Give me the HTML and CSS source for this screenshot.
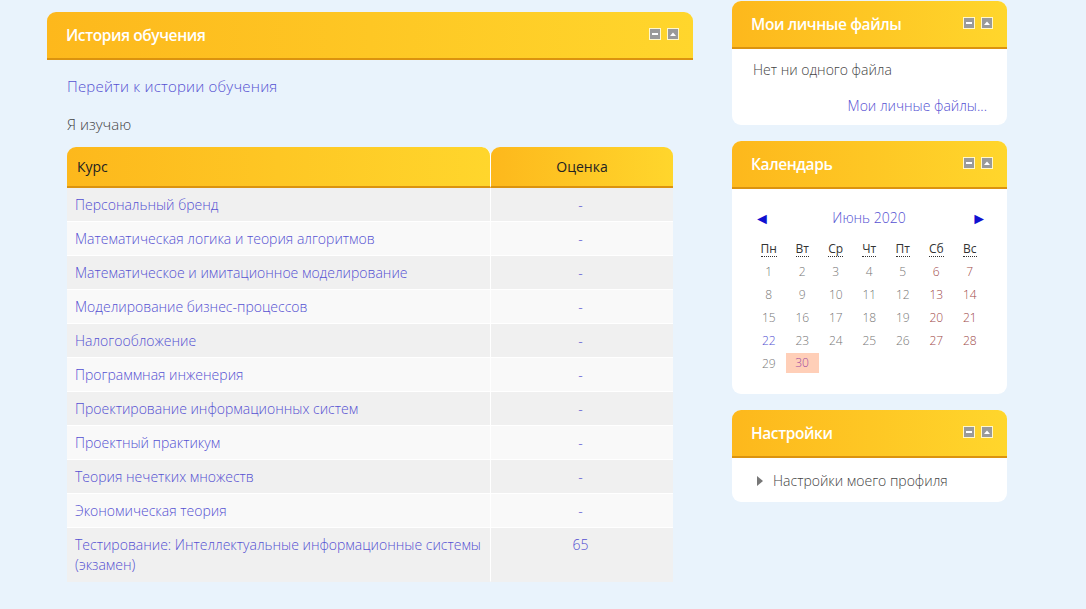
FILE: index.html
```html
<!DOCTYPE html>
<html lang="ru">
<head>
<meta charset="utf-8">
<link rel="stylesheet" href="styles.css">
</head>
<body>
<div class="page">
  <main class="main">
    <section class="block main-block">
      <header class="block-head">
        <h2>История обучения</h2>
        <div class="controls">
          <span class="ctl"><svg width="8" height="8" viewBox="0 0 8 8"><rect x="1" y="3" width="6" height="2" fill="#fff"/></svg></span>
          <span class="ctl"><svg width="8" height="8" viewBox="0 0 8 8"><path d="M1 6 L4 2.5 L7 6 Z" fill="#fff"/></svg></span>
        </div>
      </header>
      <div class="main-body">
        <p class="goto"><a href="#">Перейти к истории обучения</a></p>
        <p class="studying">Я изучаю</p>
        <table class="grades">
          <thead>
            <tr><th class="c-course">Курс</th><th class="c-grade">Оценка</th></tr>
          </thead>
          <tbody>
            <tr><td><a href="#">Персональный бренд</a></td><td class="g"><a href="#">-</a></td></tr>
            <tr><td><a href="#">Математическая логика и теория алгоритмов</a></td><td class="g"><a href="#">-</a></td></tr>
            <tr><td><a href="#">Математическое и имитационное моделирование</a></td><td class="g"><a href="#">-</a></td></tr>
            <tr><td><a href="#">Моделирование бизнес-процессов</a></td><td class="g"><a href="#">-</a></td></tr>
            <tr><td><a href="#">Налогообложение</a></td><td class="g"><a href="#">-</a></td></tr>
            <tr><td><a href="#">Программная инженерия</a></td><td class="g"><a href="#">-</a></td></tr>
            <tr><td><a href="#">Проектирование информационных систем</a></td><td class="g"><a href="#">-</a></td></tr>
            <tr><td><a href="#">Проектный практикум</a></td><td class="g"><a href="#">-</a></td></tr>
            <tr><td><a href="#">Теория нечетких множеств</a></td><td class="g"><a href="#">-</a></td></tr>
            <tr><td><a href="#">Экономическая теория</a></td><td class="g"><a href="#">-</a></td></tr>
            <tr><td><a href="#">Тестирование: Интеллектуальные информационные системы (экзамен)</a></td><td class="g"><a href="#">65</a></td></tr>
          </tbody>
        </table>
      </div>
    </section>
  </main>

  <aside class="side">
    <section class="block card">
      <header class="block-head">
        <h2>Мои личные файлы</h2>
        <div class="controls">
          <span class="ctl"><svg width="8" height="8" viewBox="0 0 8 8"><rect x="1" y="3" width="6" height="2" fill="#fff"/></svg></span>
          <span class="ctl"><svg width="8" height="8" viewBox="0 0 8 8"><path d="M1 6 L4 2.5 L7 6 Z" fill="#fff"/></svg></span>
        </div>
      </header>
      <div class="card-body files">
        <p class="nofiles">Нет ни одного файла</p>
        <p class="more"><a href="#">Мои личные файлы...</a></p>
      </div>
    </section>

    <section class="block card">
      <header class="block-head">
        <h2>Календарь</h2>
        <div class="controls">
          <span class="ctl"><svg width="8" height="8" viewBox="0 0 8 8"><rect x="1" y="3" width="6" height="2" fill="#fff"/></svg></span>
          <span class="ctl"><svg width="8" height="8" viewBox="0 0 8 8"><path d="M1 6 L4 2.5 L7 6 Z" fill="#fff"/></svg></span>
        </div>
      </header>
      <div class="card-body cal">
        <div class="cal-nav">
          <span class="arrow">◄</span>
          <a href="#" class="month">Июнь 2020</a>
          <span class="arrow">►</span>
        </div>
        <div class="cal-grid">
          <abbr>Пн</abbr><abbr>Вт</abbr><abbr>Ср</abbr><abbr>Чт</abbr><abbr>Пт</abbr><abbr>Сб</abbr><abbr>Вс</abbr>
          <span>1</span><span>2</span><span>3</span><span>4</span><span>5</span><span class="we">6</span><span class="we">7</span>
          <span>8</span><span>9</span><span>10</span><span>11</span><span>12</span><span class="we">13</span><span class="we">14</span>
          <span>15</span><span>16</span><span>17</span><span>18</span><span>19</span><span class="we">20</span><span class="we">21</span>
          <span class="ev">22</span><span>23</span><span>24</span><span>25</span><span>26</span><span class="we">27</span><span class="we">28</span>
          <span>29</span><span class="today">30</span>
        </div>
      </div>
    </section>

    <section class="block card">
      <header class="block-head">
        <h2>Настройки</h2>
        <div class="controls">
          <span class="ctl"><svg width="8" height="8" viewBox="0 0 8 8"><rect x="1" y="3" width="6" height="2" fill="#fff"/></svg></span>
          <span class="ctl"><svg width="8" height="8" viewBox="0 0 8 8"><path d="M1 6 L4 2.5 L7 6 Z" fill="#fff"/></svg></span>
        </div>
      </header>
      <div class="card-body settings">
        <p class="setitem"><svg class="tri" width="6" height="10" viewBox="0 0 6 10"><path d="M0 0 L6 5 L0 10 Z" fill="#777"/></svg>Настройки моего профиля</p>
      </div>
    </section>
  </aside>
</div>
</body>
</html>
```

FILE: styles.css
```css
* { box-sizing: border-box; }
html, body { margin: 0; padding: 0; }
body {
  background: #e9f3fc;
  font-family: "Open Sans", "Liberation Sans", sans-serif;
  font-size: 14px;
  font-weight: 300;
  color: #444;
  width: 1086px;
  height: 609px;
  overflow: hidden;
}
a { color: #5551d2; text-decoration: none; }
p { margin: 0; }

.page {
  display: flex;
  align-items: flex-start;
  padding-left: 47px;
  gap: 39px;
}

.main { width: 646px; padding-top: 12px; }
.side { width: 275px; padding-top: 1px; display: flex; flex-direction: column; gap: 16px; }

.block-head {
  height: 48px;
  display: flex;
  align-items: center;
  justify-content: space-between;
  padding: 0 14px 0 19px;
  border-radius: 9px 9px 0 0;
  background: linear-gradient(to right, #fdb81c, #ffd62c);
  border-bottom: 2px solid #db930f;
}
.block-head h2 {
  margin: 0;
  font-size: 15.5px;
  font-weight: 600;
  color: #fff;
  letter-spacing: -0.4px;
}
.controls { display: flex; gap: 6px; margin-top: -3px; }
.ctl {
  width: 12px; height: 12px;
  background: #9a9a9a;
  border: 1px solid #fff7cc;
  display: flex; align-items: center; justify-content: center;
}
.ctl svg { display: block; }

.main-body { padding: 16px 20px 0 20px; }
.goto { line-height: 20px; font-size: 15px; letter-spacing: 0.2px; }
.studying { margin-top: 18px; line-height: 20px; font-size: 15px; }

.grades {
  margin-top: 13px;
  width: 606px;
  border-collapse: separate;
  border-spacing: 0;
  font-size: 14px;
}
.grades th {
  height: 41px;
  font-weight: 400;
  font-size: 14px;
  color: #222;
  background: linear-gradient(to right, #fdb81c, #ffd62c);
  border-bottom: 2px solid #db930f;
  border-radius: 9px 9px 0 0;
  padding: 0 10px;
}
.grades th.c-course { text-align: left; width: 424px; border-right: 1px solid #fff; }
.grades th.c-grade { text-align: center; }
.grades td {
  padding: 7px 4px 6px 8px;
  line-height: 20px;
  vertical-align: top;
  border-bottom: 1px solid #fff;
}
.grades td:first-child { border-right: 1px solid #fff; }
.grades td.g { text-align: center; padding-right: 11px; }
.grades tbody tr:nth-child(odd) td { background: #f0f0f0; }
.grades tbody tr:nth-child(even) td { background: #f9f9f9; }
.grades tbody tr:last-child td { border-bottom: 1px solid #f0f0f0; }

.card { background: #fff; border-radius: 9px; }
.card-body { padding: 0 20px; }

.files { padding: 11px 20px 9px 21px; }
.nofiles { line-height: 20px; }
.more { text-align: right; margin-top: 16px; line-height: 20px; }

.cal { padding: 19px 18px 19px 20px; }
.cal-nav {
  display: flex;
  justify-content: space-between;
  align-items: center;
  padding: 0 2px 0 2px;
  line-height: 20px;
}
.arrow { color: #1010d0; font-size: 16px; font-weight: 400; }
.month { color: #5551d2; font-size: 14px; margin-right: 3px; }
.cal-grid {
  margin-top: 11px;
  display: grid;
  grid-template-columns: repeat(7, 33.5px);
  grid-template-rows: 21px;
  grid-auto-rows: 23px;
  font-size: 12px;
  text-align: center;
  color: #777;
}
.cal-grid abbr {
  color: #333;
  font-weight: 400;
  text-decoration: none;
  justify-self: center;
  align-self: center;
  line-height: 14px;
  border-bottom: 1px dotted #333;
}
.cal-grid span { line-height: 23px; }
.cal-grid .we { color: #a04a4a; }
.cal-grid .ev { color: #5551d2; }
.cal-grid .today { background: #ffcfb8; color: #a04aa0; width: 33px; height: 20px; line-height: 20px; margin-top: 1px; }

.settings { padding: 12px 20px 11px 25px; }
.setitem { display: flex; align-items: center; gap: 10px; line-height: 21px; color: #444; }
.tri { display: block; }
```
